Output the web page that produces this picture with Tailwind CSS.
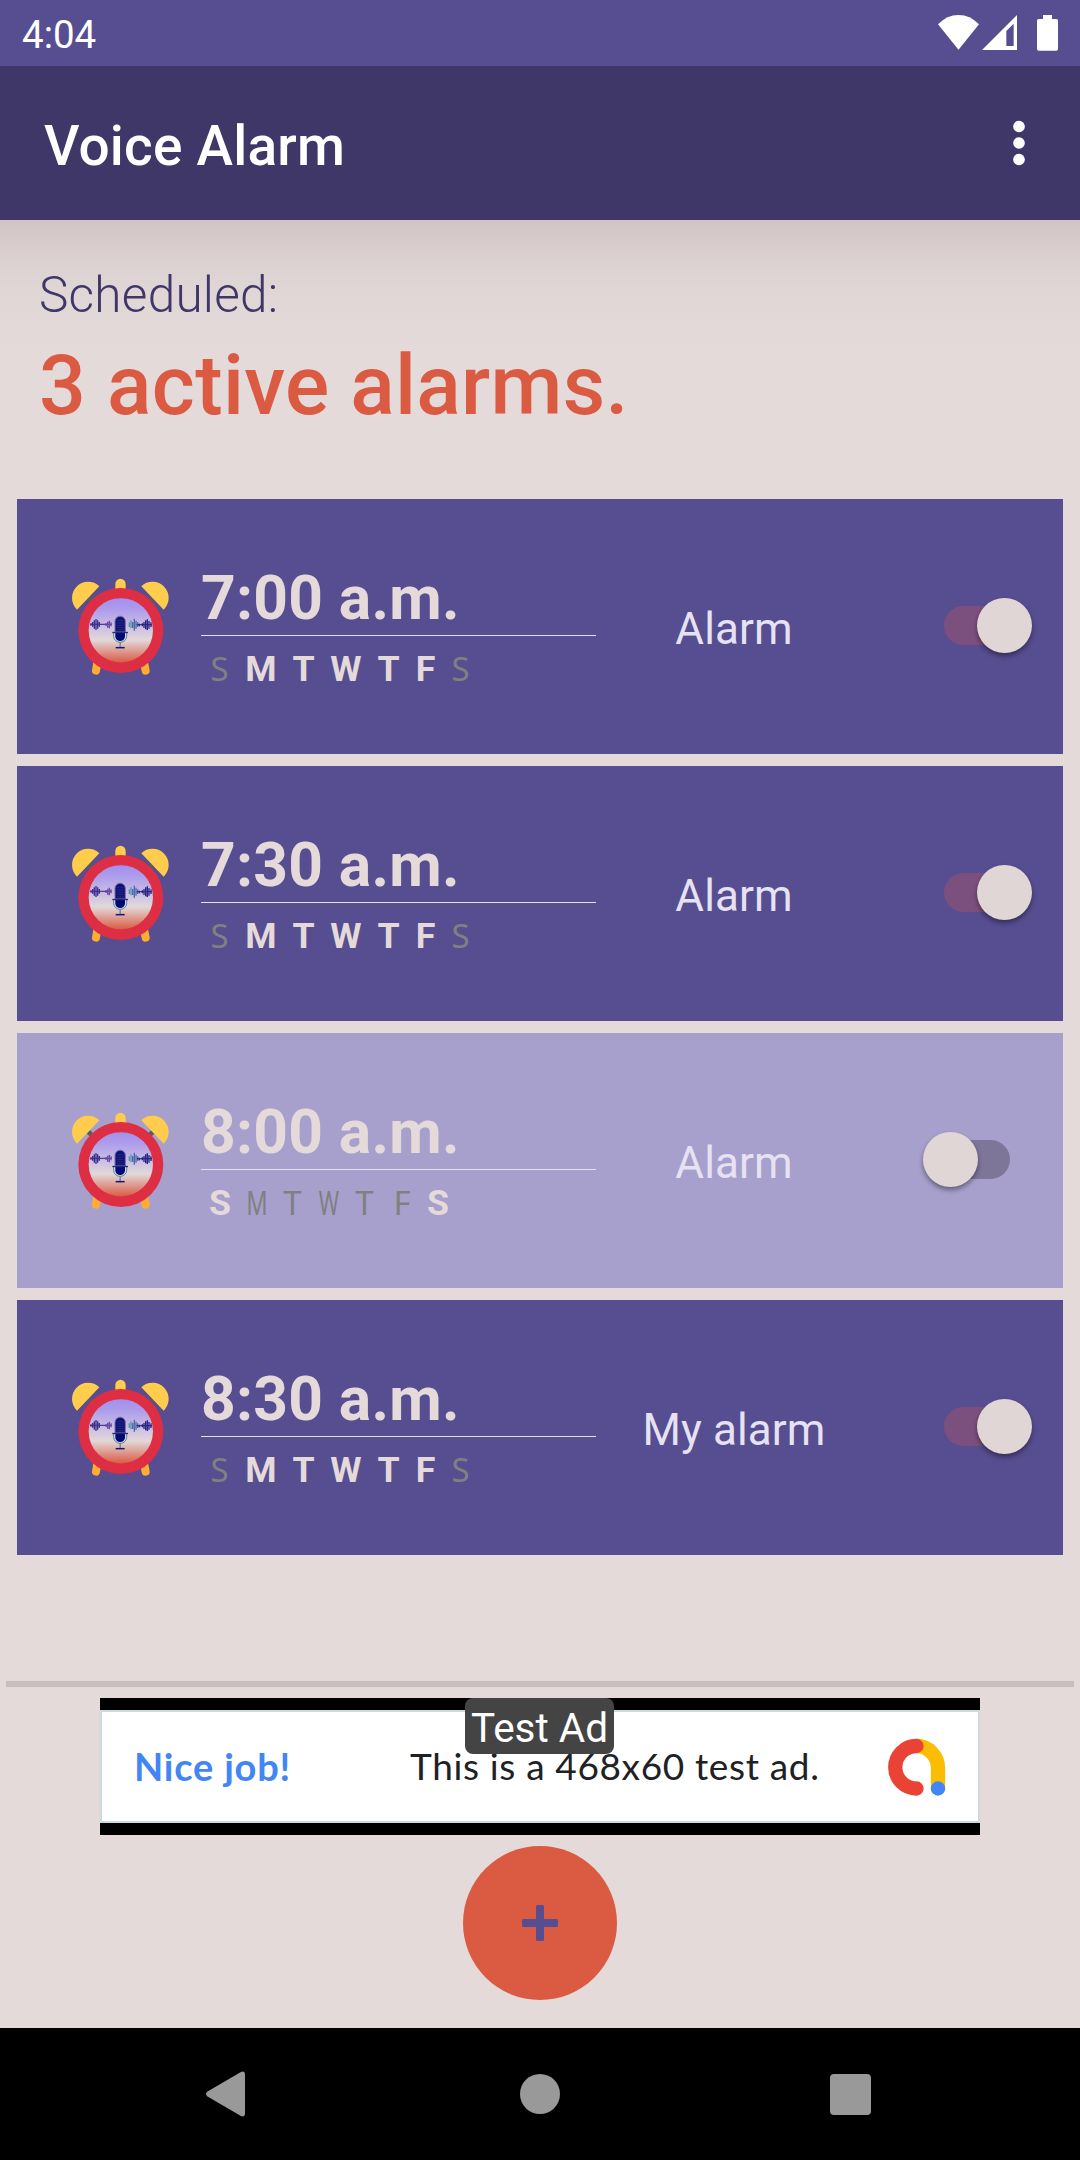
<!DOCTYPE html>
<html lang="en">
<head>
<meta charset="utf-8">
<title>Voice Alarm</title>
<script src="https://cdn.jsdelivr.net/npm/@tailwindcss/browser@4"></script>
</head>
<body class="flex h-[2160px] w-[1080px] flex-col overflow-hidden bg-[#e4dad9] font-['Roboto',sans-serif]">

<!-- Shared clock artwork -->
<svg class="absolute size-0">
  <defs>
    <linearGradient id="face" x1="0" y1="0" x2="0" y2="1">
      <stop offset="0" stop-color="#a48fef"/>
      <stop offset=".15" stop-color="#ab9aec"/>
      <stop offset=".65" stop-color="#e2d8da"/>
      <stop offset="1" stop-color="#da5b42"/>
    </linearGradient>
  </defs>
  <symbol id="clock" viewBox="0 0 420 390">
    <path d="M116 124l10-10M308 124l-10-10" stroke="#545e60" stroke-width="16"/>
    <path d="M142 308l-4 24M282 308l5 24" stroke="#ffac33" stroke-width="24" stroke-linecap="round"/>
    <path d="M196 90V72a15 15 0 0 1 31 0v18z" fill="#ffcc4d"/>
    <path d="M81 149A48 48 0 0 1 148 79zM341 149A48 48 0 0 0 274 79z" fill="#ffcc4d"/>
    <circle cx="212.500" cy="211.500" r="127.500" fill="#dd2e44"/>
    <circle cx="212.500" cy="211" r="96.500" fill="url(#face)"/>
    <g stroke-width="3.500" fill="none">
      <path d="M121 193h64" stroke="#46348e"/>
      <path d="M123 190v7M128 186v14M133 181v25M138 177v33M143 181v25M148 186v14" stroke="#3b2f8c" stroke-width="4"/>
      <path d="M168 189v9M173 185v18M178 182v23M183 187v12" stroke="#6a4ba6" stroke-width="4"/>
      <path d="M238 187v14M243 181v24" stroke="#4f9aab" stroke-width="4"/>
      <path d="M248 186v18M253 176v36M258 182v24M263 187v14" stroke="#4a6aaa" stroke-width="4"/>
      <path d="M260 194h46" stroke="#2b2a85"/>
      <path d="M268 191v8M277 190v9M282 186v18M287 181v27M292 178v32M297 183v23M303 187v14" stroke="#272482" stroke-width="4"/>
    </g>
    <path d="M195 216v-32a15.500 15.500 0 0 1 31 0v32z" fill="#101374" stroke="#7472ae" stroke-width="3"/>
    <path d="M201 182h19M201 189h19M201 196h19M201 203h19M201 210h19" stroke="#343088" stroke-width="2"/>
    <path d="M191 217v12a19.500 18 0 0 0 39 0v-12" fill="#d3dcdf" stroke="#59869a" stroke-width="3"/>
    <path d="M196 219h29v12q-3 12-14.500 12T196 231z" fill="#000875"/>
    <path d="M187 217.500h47" stroke="#262a79" stroke-width="4"/>
    <path d="M210.500 247v16" stroke="#6e8094" stroke-width="4"/>
    <path d="M197 263h27" stroke="#101578" stroke-width="4.500"/>
  </symbol>
</svg>

<header class="relative z-10 shrink-0">
  <div class="flex h-[66px] items-center justify-between bg-[#574d91] pl-[22px]">
    <span class="pt-[5px] text-[38.5px] leading-none text-white">4:04</span>
    <svg class="h-[66px] w-[180px]" viewBox="0 0 540 198" fill="#fff">
      <path d="M114 73Q141 45 175.500 45T237 73L175.500 149z"/>
      <path fill-rule="evenodd" d="M351 45V150H246zM341 71L319 93V138H341z"/>
      <path d="M429 45h27v12h13q5 0 5 5v85q0 5-5 5h-53q-5 0-5-5V62q0-5 5-5h13z"/>
    </svg>
  </div>
  <div class="flex h-[154px] items-center justify-between bg-[#3f3768] pl-11">
    <h1 class="pt-[6px] text-[55px] leading-none font-medium tracking-[0.2px] text-white">Voice Alarm</h1>
    <svg class="h-[154px] w-[180px]" viewBox="0 0 540 462" fill="#fff">
      <circle cx="357" cy="181.500" r="17.500"/><circle cx="357" cy="231" r="17.500"/><circle cx="357" cy="280.500" r="17.500"/>
    </svg>
  </div>
  <div class="absolute top-full left-0 -z-10 h-[130px] w-full bg-[linear-gradient(to_bottom,#d0c5c4_0%,#d7cccb_16%,#dcd2d1_35%,#e0d6d5_55%,#e2d8d7_75%,#e4dad9_100%)]"></div>
</header>

<section class="z-10 shrink-0 px-[39px] pt-[45px]">
  <p class="text-[49.5px] leading-[60px] font-light tracking-[0.25px] text-[#3f3768]">Scheduled:</p>
  <p class="mt-[13px] text-[82.5px] leading-[96px] font-medium tracking-[0.3px] text-[#da5b42]">3 active alarms.</p>
</section>

<main class="mt-[65px] flex shrink-0 flex-col gap-3 px-[17px]">
  <article class="flex h-[255px] items-start bg-[#574d91] pl-[33px]">
    <svg class="mt-[61px] h-[130px] w-[140px] shrink-0"><use href="#clock"/></svg>
    <div class="mt-[68px] ml-[11px] w-[395px] shrink-0 text-[#e4dad9]">
      <div class="border-b border-[#e6e0f5] pb-1 text-[60.5px] leading-[64px] font-bold tracking-[0.3px]">7:00 a.m.</div>
      <div class="mt-[13px] flex text-center text-[35.75px] leading-10 font-bold">
        <span class="w-[37px] font-['Noto_Sans',sans-serif] text-[33px] font-normal text-[#808080]">S</span><span class="w-[46px]">M</span><span class="w-[39px]">T</span><span class="w-[46px]">W</span><span class="w-[39px]">T</span><span class="w-[35px]">F</span><span class="w-[35px] font-['Noto_Sans',sans-serif] text-[33px] font-normal text-[#808080]">S</span>
      </div>
    </div>
    <div class="mt-[104px] w-[276px] shrink-0 text-center text-[44px] leading-[52px] tracking-[0.1px] text-[#e6e2f2]">Alarm</div>
    <div class="relative mt-[99px] ml-[50px] h-[56px] w-[110px] shrink-0">
      <div class="absolute top-[8px] left-[22px] h-[39px] w-[66px] rounded-full bg-[#7c507e]"></div>
      <div class="absolute top-0 right-0 size-[55px] rounded-full bg-[#e0d6d5] shadow-[0_3px_5px_rgba(0,0,0,0.4)]"></div>
    </div>
  </article>

  <article class="flex h-[255px] items-start bg-[#574d91] pl-[33px]">
    <svg class="mt-[61px] h-[130px] w-[140px] shrink-0"><use href="#clock"/></svg>
    <div class="mt-[68px] ml-[11px] w-[395px] shrink-0 text-[#e4dad9]">
      <div class="border-b border-[#e6e0f5] pb-1 text-[60.5px] leading-[64px] font-bold tracking-[0.3px]">7:30 a.m.</div>
      <div class="mt-[13px] flex text-center text-[35.75px] leading-10 font-bold">
        <span class="w-[37px] font-['Noto_Sans',sans-serif] text-[33px] font-normal text-[#808080]">S</span><span class="w-[46px]">M</span><span class="w-[39px]">T</span><span class="w-[46px]">W</span><span class="w-[39px]">T</span><span class="w-[35px]">F</span><span class="w-[35px] font-['Noto_Sans',sans-serif] text-[33px] font-normal text-[#808080]">S</span>
      </div>
    </div>
    <div class="mt-[104px] w-[276px] shrink-0 text-center text-[44px] leading-[52px] tracking-[0.1px] text-[#e6e2f2]">Alarm</div>
    <div class="relative mt-[99px] ml-[50px] h-[56px] w-[110px] shrink-0">
      <div class="absolute top-[8px] left-[22px] h-[39px] w-[66px] rounded-full bg-[#7c507e]"></div>
      <div class="absolute top-0 right-0 size-[55px] rounded-full bg-[#e0d6d5] shadow-[0_3px_5px_rgba(0,0,0,0.4)]"></div>
    </div>
  </article>

  <article class="flex h-[255px] items-start bg-[#a7a0cd] pl-[33px]">
    <svg class="mt-[61px] h-[130px] w-[140px] shrink-0"><use href="#clock"/></svg>
    <div class="mt-[68px] ml-[11px] w-[395px] shrink-0 text-[#e4dad9]">
      <div class="border-b border-[#e6e0f5] pb-1 text-[60.5px] leading-[64px] font-bold tracking-[0.3px]">8:00 a.m.</div>
      <div class="mt-[13px] flex text-center text-[35.75px] leading-10 font-bold">
        <span class="w-[38px]">S</span><span class="w-[36px] scale-x-[0.72] font-['Noto_Sans',sans-serif] text-[33px] font-normal text-[#808080]">M</span><span class="w-[35px] font-['Noto_Sans',sans-serif] text-[33px] font-normal text-[#808080]">T</span><span class="w-[38px] scale-x-[0.66] font-['Noto_Sans',sans-serif] text-[33px] font-normal text-[#808080]">W</span><span class="w-[33px] font-['Noto_Sans',sans-serif] text-[33px] font-normal text-[#808080]">T</span><span class="w-[42px] font-['Noto_Sans',sans-serif] text-[33px] font-normal text-[#808080]">F</span><span class="w-[30px]">S</span>
      </div>
    </div>
    <div class="mt-[104px] w-[276px] shrink-0 text-center text-[44px] leading-[52px] tracking-[0.1px] text-[#e6e2f2]">Alarm</div>
    <div class="relative mt-[99px] ml-[50px] h-[56px] w-[110px] shrink-0">
      <div class="absolute top-[8px] left-[22px] h-[39px] w-[66px] rounded-full bg-[#7d7698]"></div>
      <div class="absolute top-0 left-px size-[55px] rounded-full bg-[#e0d6d5] shadow-[0_3px_5px_rgba(0,0,0,0.4)]"></div>
    </div>
  </article>

  <article class="flex h-[255px] items-start bg-[#574d91] pl-[33px]">
    <svg class="mt-[61px] h-[130px] w-[140px] shrink-0"><use href="#clock"/></svg>
    <div class="mt-[68px] ml-[11px] w-[395px] shrink-0 text-[#e4dad9]">
      <div class="border-b border-[#e6e0f5] pb-1 text-[60.5px] leading-[64px] font-bold tracking-[0.3px]">8:30 a.m.</div>
      <div class="mt-[13px] flex text-center text-[35.75px] leading-10 font-bold">
        <span class="w-[37px] font-['Noto_Sans',sans-serif] text-[33px] font-normal text-[#808080]">S</span><span class="w-[46px]">M</span><span class="w-[39px]">T</span><span class="w-[46px]">W</span><span class="w-[39px]">T</span><span class="w-[35px]">F</span><span class="w-[35px] font-['Noto_Sans',sans-serif] text-[33px] font-normal text-[#808080]">S</span>
      </div>
    </div>
    <div class="mt-[104px] w-[276px] shrink-0 text-center text-[44px] leading-[52px] tracking-[0.1px] text-[#e6e2f2]">My alarm</div>
    <div class="relative mt-[99px] ml-[50px] h-[56px] w-[110px] shrink-0">
      <div class="absolute top-[8px] left-[22px] h-[39px] w-[66px] rounded-full bg-[#7c507e]"></div>
      <div class="absolute top-0 right-0 size-[55px] rounded-full bg-[#e0d6d5] shadow-[0_3px_5px_rgba(0,0,0,0.4)]"></div>
    </div>
  </article>
</main>

<div class="mx-[6px] mt-[126px] h-[6px] shrink-0 bg-[#c9bebd]"></div>

<!-- Banner ad -->
<aside class="relative mx-[100px] mt-[11px] h-[137px] shrink-0 bg-black py-3">
  <div class="flex h-[113px] items-center border-2 border-[#d0d9dd] bg-white pl-8 font-['Lato',sans-serif]">
    <span class="w-[276px] pb-[2px] text-[38px] leading-[44px] font-bold tracking-[0.8px] text-[#4285f4]">Nice job!</span>
    <span class="w-[477px] pb-[2px] text-[37px] leading-[44px] tracking-[0.65px] whitespace-nowrap text-[#202124]">This is a 468x60 test ad.</span>
    <svg class="h-[60px] w-[60px]" viewBox="0 0 60 60" fill="none" stroke-linecap="round" stroke-width="14.300">
      <path d="M29.500 9A21.500 22 0 0 1 51 31V51" stroke="#fbbc04"/>
      <path d="M29.500 9A21.250 21.250 0 0 0 29.500 51.500" stroke="#ea4335"/>
      <circle cx="51" cy="51.500" r="7.200" fill="#4285f4"/>
    </svg>
  </div>
  <div class="absolute top-0 left-[365px] h-[56px] w-[149px] rounded-lg bg-[#444] text-center text-[40.5px] leading-[60px] whitespace-nowrap text-white">Test Ad</div>
</aside>

<button class="mx-auto mt-[11px] flex size-[154px] shrink-0 items-center justify-center rounded-full bg-[#da5b42]">
  <svg class="size-9" viewBox="0 0 36 36" fill="#574d91"><rect x="14" width="8" height="36" rx="1.500"/><rect y="14" width="36" height="8" rx="1.500"/></svg>
</button>

<nav class="mt-7 flex h-[132px] shrink-0 items-center justify-between bg-black pr-[209px] pl-[205px]">
  <svg class="h-[46px] w-[41px]" viewBox="0 0 41 46" fill="#999"><path d="M2.500 20.500L35.500 1.200Q40 -.8 40 4V42q0 4.800-4.500 2.800L2.500 25.500q-3-2.500 0-5z"/></svg>
  <div class="ml-1 size-10 rounded-full bg-[#999]"></div>
  <div class="size-[41px] rounded-[4px] bg-[#999]"></div>
</nav>
</body>
</html>
